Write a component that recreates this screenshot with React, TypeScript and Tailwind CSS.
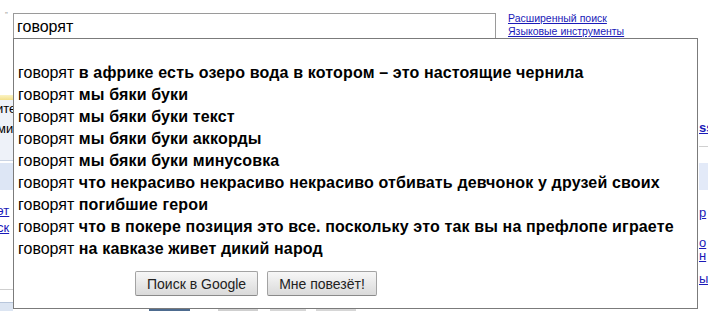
const suggestions = [
  "в африке есть озеро вода в котором – это настоящие чернила",
  "мы бяки буки",
  "мы бяки буки текст",
  "мы бяки буки аккорды",
  "мы бяки буки минусовка",
  "что некрасиво некрасиво некрасиво отбивать девчонок у друзей своих",
  "погибшие герои",
  "что в покере позиция это все. поскольку это так вы на префлопе играете",
  "на кавказе живет дикий народ",
];

function Clip({ children, className = "" }: { children: React.ReactNode; className?: string }) {
  return <div className={"overflow-hidden whitespace-nowrap " + className}>{children}</div>;
}

function LeftEdge() {
  return (
    <div className="w-[13px] shrink-0 overflow-hidden flex flex-col text-[13px] leading-[15px]">
      <div className="h-[57px]" />
      <div className="h-[5px] bg-gradient-to-b from-[#fbf3c4] to-[#f3e08a]" />
      <div className="h-[60px] bg-[#eef2f9] flex flex-col pt-[1px]">
        <Clip className="h-[16px] leading-[16px] -ml-[4px] text-black">ите</Clip>
        <Clip className="h-[16px] leading-[16px] -ml-[3px] mt-[4px] text-black">ми</Clip>
      </div>
      <div className="h-px bg-[#c9d3e3]" />
      <div className="h-[2px]" />
      <div className="h-[27px] bg-[#dde6f5]" />
      <div className="h-[12px]" />
      <Clip className="h-[17px] leading-[17px] -ml-[3px] text-[#1a1ab8] underline">эт</Clip>
      <Clip className="h-[17px] leading-[17px] -ml-[3px] text-[#1a1ab8] underline">ск</Clip>
      <div className="h-[53px]" />
      <div className="h-px bg-[#cfcfcf]" />
      <div className="h-[12px]" />
      <div className="h-[9px] bg-[#dce5f2] border-t border-[#b8c6db]" />
    </div>
  );
}

function RightEdge() {
  return (
    <div className="w-[10px] shrink-0 overflow-hidden flex flex-col text-[13px] leading-[16px] pl-[1px]">
      <div className="h-[82px]" />
      <Clip className="h-[16px] text-[#1a1ab8] underline font-bold">ss</Clip>
      <div className="h-[10px]" />
      <div className="h-px bg-[#d0d0d0]" />
      <div className="h-[16px]" />
      <div className="h-[27px] bg-[#e3eaf8]" />
      <div className="h-[15px]" />
      <Clip className="h-[16px] text-[#1a1ab8] underline">р</Clip>
      <div className="h-[16px]" />
      <Clip className="h-[12px] leading-[12px] text-[#1a1ab8] underline">о</Clip>
      <Clip className="h-[12px] leading-[12px] mt-[1px] text-[#1a1ab8] underline">н</Clip>
      <div className="h-[9px]" />
      <Clip className="h-[16px] text-[#1a1ab8] underline">ы</Clip>
    </div>
  );
}

function Button({ children }: { children: React.ReactNode }) {
  return (
    <button className="h-[25px] px-[11px] rounded-[2px] border border-[#a3a3a3] border-b-[#8a8a8a] bg-gradient-to-b from-[#f7f7f7] to-[#dadada] text-[14px] leading-[18px] text-[#222]">
      {children}
    </button>
  );
}

export default function App() {
  return (
    <div className="relative w-[708px] h-[311px] overflow-hidden bg-white font-['Liberation_Sans',Arial,sans-serif] text-black">
      <div className="flex h-[38px]">
        <div className="w-[13px] shrink-0 pt-[11px] pl-[5px] text-[9px] leading-[8px] text-[#b0b0b0]">‟</div>
        <div className="mt-[13px] w-[483px] h-[25px] border border-[#9a9a9a] border-b-0 pl-[3px] pt-[2px] text-[16px] leading-[22px]">
          говорят
        </div>
        <div className="ml-[12px] pt-[12px] flex flex-col text-[10.5px] leading-[13px]">
          <a className="text-[#1a1ab8] underline" href="#">Расширенный поиск</a>
          <a className="text-[#1a1ab8] underline" href="#">Языковые инструменты</a>
        </div>
      </div>
      <div className="flex h-[273px]">
        <LeftEdge />
        <div className="flex-1 flex flex-col justify-end">
          <div className="h-[3px] flex">
            <div className="ml-[136px] w-[41px] bg-[#4d6b8f]" />
            <div className="ml-[28px] w-[40px] bg-[#cfcfcf]" />
            <div className="ml-[12px] w-[36px] bg-[#d6d6d6]" />
            <div className="ml-[10px] w-[40px] bg-[#d6d6d6]" />
          </div>
        </div>
        <RightEdge />
      </div>

      <div className="absolute left-[13px] top-[38px] w-[685px] h-[271px] border border-[#7b7b7b] bg-white flex flex-col">
        <div className="h-[23px]" />
        {suggestions.map((s) => (
          <div key={s} className="h-[22px] pl-[4px] text-[16px] leading-[22px] whitespace-nowrap">
            говорят <b className="font-bold tracking-[0.15px]">{s}</b>
          </div>
        ))}
        <div className="mt-[11px] pl-[121px] flex gap-[9px]">
          <Button>Поиск в Google</Button>
          <Button>Мне повезёт!</Button>
        </div>
      </div>
    </div>
  );
}
